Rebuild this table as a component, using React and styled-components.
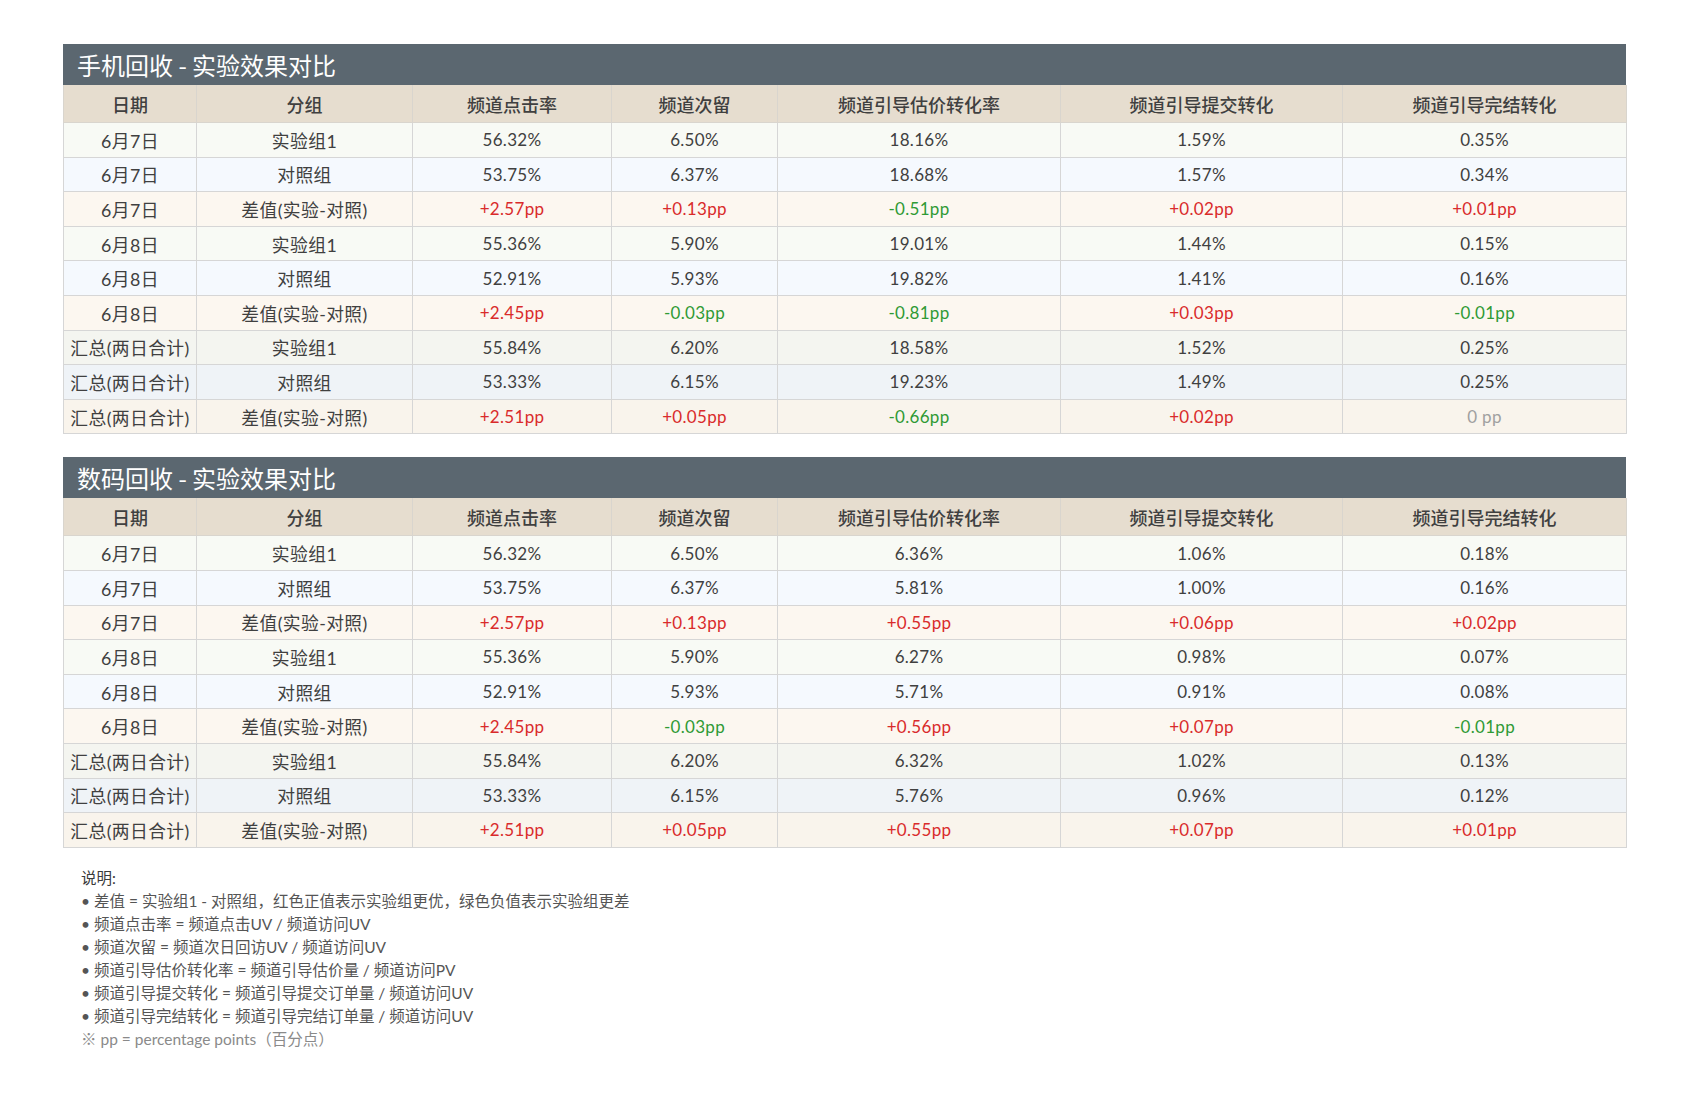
import React from "react";
import styled, { createGlobalStyle } from "styled-components";

const GlobalStyle = createGlobalStyle`
  html, body {
    margin: 0;
    padding: 0;
    background: #ffffff;
  }
  body {
    font-family: Lato, "Noto Sans CJK SC", sans-serif;
    color: #3d3d3d;
  }
`;

const COLS = [133, 216, 199, 166, 283, 282, 284];
const HEADERS = ["日期", "分组", "频道点击率", "频道次留", "频道引导估价转化率", "频道引导提交转化", "频道引导完结转化"];

const GROUPS = { exp: "实验组1", ctl: "对照组", diff: "差值(实验-对照)" };

const SECTIONS = [
  {
    title: "手机回收 - 实验效果对比",
    rows: [
      ["6月7日", "exp", ["56.32%", "6.50%", "18.16%", "1.59%", "0.35%"]],
      ["6月7日", "ctl", ["53.75%", "6.37%", "18.68%", "1.57%", "0.34%"]],
      ["6月7日", "diff", ["+2.57pp", "+0.13pp", "-0.51pp", "+0.02pp", "+0.01pp"]],
      ["6月8日", "exp", ["55.36%", "5.90%", "19.01%", "1.44%", "0.15%"]],
      ["6月8日", "ctl", ["52.91%", "5.93%", "19.82%", "1.41%", "0.16%"]],
      ["6月8日", "diff", ["+2.45pp", "-0.03pp", "-0.81pp", "+0.03pp", "-0.01pp"]],
      ["汇总(两日合计)", "exp", ["55.84%", "6.20%", "18.58%", "1.52%", "0.25%"], true],
      ["汇总(两日合计)", "ctl", ["53.33%", "6.15%", "19.23%", "1.49%", "0.25%"], true],
      ["汇总(两日合计)", "diff", ["+2.51pp", "+0.05pp", "-0.66pp", "+0.02pp", "0 pp"], true],
    ],
  },
  {
    title: "数码回收 - 实验效果对比",
    rows: [
      ["6月7日", "exp", ["56.32%", "6.50%", "6.36%", "1.06%", "0.18%"]],
      ["6月7日", "ctl", ["53.75%", "6.37%", "5.81%", "1.00%", "0.16%"]],
      ["6月7日", "diff", ["+2.57pp", "+0.13pp", "+0.55pp", "+0.06pp", "+0.02pp"]],
      ["6月8日", "exp", ["55.36%", "5.90%", "6.27%", "0.98%", "0.07%"]],
      ["6月8日", "ctl", ["52.91%", "5.93%", "5.71%", "0.91%", "0.08%"]],
      ["6月8日", "diff", ["+2.45pp", "-0.03pp", "+0.56pp", "+0.07pp", "-0.01pp"]],
      ["汇总(两日合计)", "exp", ["55.84%", "6.20%", "6.32%", "1.02%", "0.13%"], true],
      ["汇总(两日合计)", "ctl", ["53.33%", "6.15%", "5.76%", "0.96%", "0.12%"], true],
      ["汇总(两日合计)", "diff", ["+2.51pp", "+0.05pp", "+0.55pp", "+0.07pp", "+0.01pp"], true],
    ],
  },
];

const NOTES = [
  "差值 = 实验组1 - 对照组，红色正值表示实验组更优，绿色负值表示实验组更差",
  "频道点击率 = 频道点击UV / 频道访问UV",
  "频道次留 = 频道次日回访UV / 频道访问UV",
  "频道引导估价转化率 = 频道引导估价量 / 频道访问PV",
  "频道引导提交转化 = 频道引导提交订单量 / 频道访问UV",
  "频道引导完结转化 = 频道引导完结订单量 / 频道访问UV",
];

const ROW_BG = {
  exp: ["#f8faf5", "#f4f5f0"],
  ctl: ["#f5f9fe", "#eff3f7"],
  diff: ["#fcf7f0", "#f9f4ec"],
};

const Page = styled.div`
  box-sizing: border-box;
  width: 1687px;
  padding: 44px 61px 40px 63px;
`;

const Section = styled.section`
  margin-bottom: 23px;

  &:last-of-type {
    margin-bottom: 19px;
  }
`;

const TitleBar = styled.div`
  display: flex;
  align-items: center;
  height: 41px;
  padding-left: 14px;
  background: #5b6770;
  color: #ffffff;
  font-size: 24px;
  font-weight: 400;
  font-family: "Noto Sans CJK SC", sans-serif;
`;

const Table = styled.table`
  width: 100%;
  border-collapse: collapse;
  table-layout: fixed;
`;

const HeadCell = styled.th`
  height: 37px;
  padding: 0;
  background: #e6ddcf;
  border: 1px solid #d9d5ce;
  border-top: none;
  color: #404040;
  font-size: 18px;
  font-weight: 500;
  text-align: center;
  font-family: "Noto Sans CJK SC", sans-serif;
`;

const Row = styled.tr`
  background: ${(p) => ROW_BG[p.$kind][p.$summary ? 1 : 0]};
`;

const Cell = styled.td`
  height: 33.6px;
  padding: 0;
  border: 1px solid #d6d6d6;
  text-align: center;
  font-size: ${(p) => (p.$label ? "17.8px" : "17px")};
  letter-spacing: ${(p) => (p.$label ? "0.4px" : "0.3px")};
  white-space: nowrap;
  color: ${(p) => p.$tone || "#404040"};
`;

const Notes = styled.div`
  padding-left: 18px;
  font-family: Lato, "Noto Sans CJK SC", sans-serif;
  font-size: 15.5px;
  line-height: 23px;
  color: #555555;
`;

const NoteTitle = styled.div`
  color: #3a3a3a;
`;

const NoteLine = styled.div`
  color: ${(p) => (p.$muted ? "#8a8a8a" : "#555555")};
`;

const toneOf = (kind, v) => {
  if (kind !== "diff") return undefined;
  if (v.startsWith("+")) return "#d92b2b";
  if (v.startsWith("-")) return "#2f9a35";
  return "#a0a0a0";
};

const ResultTable = ({ title, rows }) => (
  <Section>
    <TitleBar>{title}</TitleBar>
    <Table>
      <colgroup>
        {COLS.map((w, i) => (
          <col key={i} style={{ width: w }} />
        ))}
      </colgroup>
      <thead>
        <tr>
          {HEADERS.map((h) => (
            <HeadCell key={h}>{h}</HeadCell>
          ))}
        </tr>
      </thead>
      <tbody>
        {rows.map(([date, kind, values, summary], i) => (
          <Row key={i} $kind={kind} $summary={summary}>
            <Cell $label>{date}</Cell>
            <Cell $label>{GROUPS[kind]}</Cell>
            {values.map((v, j) => (
              <Cell key={j} $tone={toneOf(kind, v)}>
                {v}
              </Cell>
            ))}
          </Row>
        ))}
      </tbody>
    </Table>
  </Section>
);

const App = () => {
  return (
    <Page>
      <GlobalStyle />
      {SECTIONS.map((s) => (
        <ResultTable key={s.title} title={s.title} rows={s.rows} />
      ))}
      <Notes>
        <NoteTitle>说明:</NoteTitle>
        {NOTES.map((n) => (
          <NoteLine key={n}>• {n}</NoteLine>
        ))}
        <NoteLine $muted>※ pp = percentage points（百分点）</NoteLine>
      </Notes>
    </Page>
  );
};

export default App;
